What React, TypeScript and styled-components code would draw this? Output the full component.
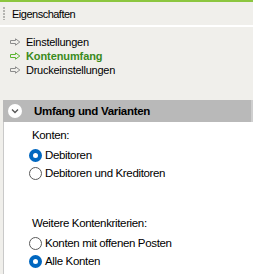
import React from 'react';
import styled, { createGlobalStyle } from 'styled-components';

const GlobalStyle = createGlobalStyle`
  html, body {
    margin: 0;
    padding: 0;
    background: #f0efeb;
  }
`;

const StyledFrame = styled.div`
  width: 253px;
  height: 274px;
  overflow: hidden;
  border-top: 2px solid #8cc63f;
  box-sizing: border-box;
  background: #f0efeb;
  font-family: 'Liberation Sans', Arial, sans-serif;
  color: #000;
`;
const StyledTitleBar = styled.div`
  height: 23px;
  display: flex;
  align-items: center;
  padding-left: 3px;
  font-size: 11px;
  letter-spacing: -0.5px;
`;
const StyledGrip = styled.div`
  width: 2px;
  height: 13px;
  margin-right: 7px;
  background: repeating-linear-gradient(to bottom, #b4b4b0 0 2px, transparent 2px 3px);
`;
const StyledDivider = styled.div`
  height: 2px;
  background: #ffffff;
`;
const StyledNav = styled.ul`
  list-style: none;
  margin: 0;
  padding: 8px 0 0 10px;
  height: 65px;
`;
const StyledNavItem = styled.li<{ $active?: boolean }>`
  display: flex;
  align-items: center;
  height: 14px;
  font-size: 11px;
  letter-spacing: ${(p) => (p.$active ? '-0.1px' : '-0.25px')};
  font-weight: ${(p) => (p.$active ? 'bold' : 'normal')};
  color: ${(p) => (p.$active ? '#3a8a1c' : '#000')};
  svg {
    margin-right: 5px;
  }
`;
const StyledSection = styled.section`
  margin-left: 3px;
  background: #ffffff;
`;
const StyledSectionHeader = styled.div`
  height: 22px;
  display: flex;
  align-items: center;
  padding-left: 5px;
  background: #b9b9b9;
  border-right: 2px solid #cfcfcf;
  font-size: 11.5px;
  font-weight: bold;
  letter-spacing: -0.3px;
`;
const StyledChevron = styled.span`
  width: 14px;
  height: 14px;
  border-radius: 50%;
  background: #ffffff;
  display: flex;
  align-items: center;
  justify-content: center;
  margin-right: 12px;
`;
const StyledSectionBody = styled.div`
  border-left: 1px solid #c9c9c9;
  padding: 5px 0 20px 25px;
  height: 160px;
  font-size: 11.5px;
  letter-spacing: -0.35px;
`;
const StyledLabel = styled.div<{ $top?: number }>`
  height: 16px;
  line-height: 16px;
  padding-left: 3px;
  margin-top: ${(p) => p.$top ?? 0}px;
  margin-bottom: 3px;
`;
const StyledRadioRow = styled.label`
  display: flex;
  align-items: center;
  height: 18px;
`;
const StyledRadio = styled.span<{ $checked?: boolean }>`
  width: 13px;
  height: 13px;
  box-sizing: border-box;
  border-radius: 50%;
  margin-right: 3px;
  background: #ffffff;
  border: ${(p) => (p.$checked ? '4px solid #0067c0' : '1px solid #5a5a5a')};
`;

function NavArrow({ color }: { color: string }) {
  return (
    <svg width="11" height="8" viewBox="0 0 11 8">
      <path
        d="M0.5 2.5 H5.5 V0.8 L9.8 4 L5.5 7.2 V5.5 H0.5 Z"
        fill="none"
        stroke={color}
        strokeWidth="1"
      />
    </svg>
  );
}

function Radio({ checked, children }: { checked?: boolean; children: string }) {
  return (
    <StyledRadioRow>
      <StyledRadio $checked={checked} />
      {children}
    </StyledRadioRow>
  );
}

const navItems = [
  { label: 'Einstellungen' },
  { label: 'Kontenumfang', active: true },
  { label: 'Druckeinstellungen' },
];

export default function App() {
  return (
    <>
      <GlobalStyle />
      <StyledFrame>
        <StyledTitleBar>
          <StyledGrip />
          Eigenschaften
        </StyledTitleBar>
        <StyledDivider />
        <StyledNav>
          {navItems.map((item) => (
            <StyledNavItem key={item.label} $active={item.active}>
              <NavArrow color={item.active ? '#5cb531' : '#8c8c8c'} />
              {item.label}
            </StyledNavItem>
          ))}
        </StyledNav>
        <StyledSection>
          <StyledSectionHeader>
            <StyledChevron>
              <svg width="8" height="6" viewBox="0 0 8 6">
                <path d="M1 1.5 L4 4.5 L7 1.5" fill="none" stroke="#555" strokeWidth="1.3" />
              </svg>
            </StyledChevron>
            Umfang und Varianten
          </StyledSectionHeader>
          <StyledSectionBody>
            <StyledLabel>Konten:</StyledLabel>
            <Radio checked>Debitoren</Radio>
            <Radio>Debitoren und Kreditoren</Radio>
            <StyledLabel $top={33}>Weitere Kontenkriterien:</StyledLabel>
            <Radio>Konten mit offenen Posten</Radio>
            <Radio checked>Alle Konten</Radio>
          </StyledSectionBody>
        </StyledSection>
      </StyledFrame>
    </>
  );
}
